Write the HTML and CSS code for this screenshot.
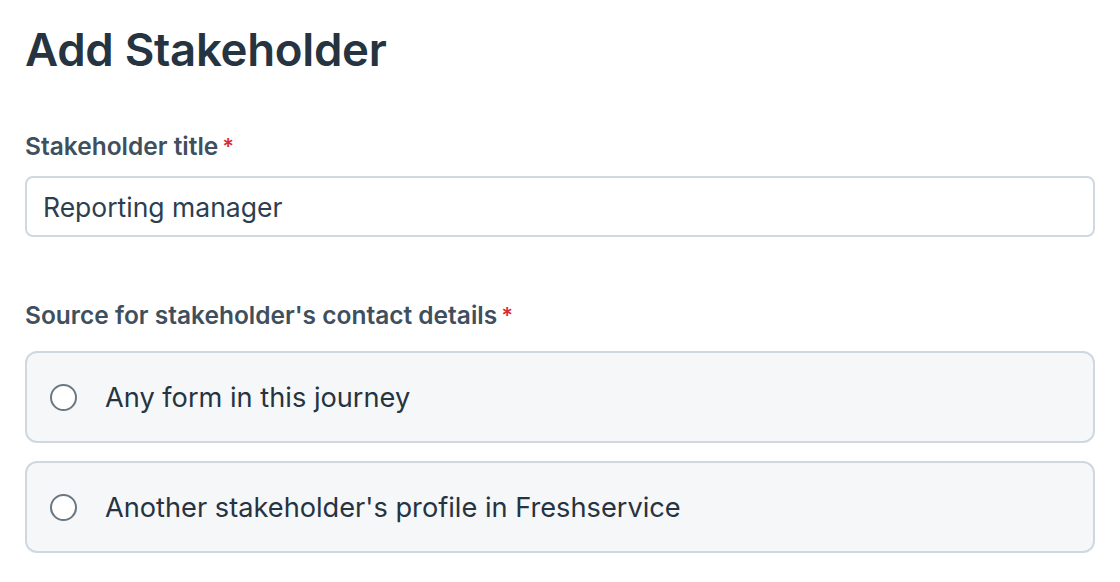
FILE: index.html
```html
<!DOCTYPE html>
<html lang="en">
<head>
<meta charset="utf-8">
<title>Add Stakeholder</title>
<link rel="stylesheet" href="styles.css">
</head>
<body>
<main class="page">
  <h1 class="title">Add Stakeholder</h1>
  <div class="field">
    <label class="label" for="st">Stakeholder title<span class="req">*</span></label>
    <div class="input" id="st">Reporting manager</div>
  </div>
  <div class="field field-radio">
    <div class="label">Source for stakeholder's contact details<span class="req">*</span></div>
    <div class="options">
      <div class="option"><span class="radio"></span><span class="option-text">Any form in this journey</span></div>
      <div class="option"><span class="radio"></span><span class="option-text">Another stakeholder's profile in Freshservice</span></div>
    </div>
  </div>
</main>
</body>
</html>
```
FILE: styles.css
```css
html, body {
  margin: 0;
  padding: 0;
  background: #ffffff;
}
body {
  font-family: Inter, "Noto Sans", sans-serif;
  color: #263340;
}
.page {
  padding: 22px 25px 0 25px;
  width: 1070px;
}
.title {
  margin: 0;
  font-size: 45.6px;
  line-height: 56px;
  font-weight: 600;
  color: #263340;
  letter-spacing: -0.3px;
}
.field {
  margin-top: 53px;
}
.label {
  display: flex;
  align-items: flex-start;
  font-size: 24.5px;
  line-height: 30px;
  font-weight: 600;
  color: #404f5d;
}
.req {
  color: #d72d30;
  margin-left: 4px;
  font-size: 22px;
}
.input {
  margin-top: 15px;
  border: 2px solid #cfd8e1;
  border-radius: 8px;
  box-sizing: border-box;
  height: 61px;
  padding: 0 16px;
  display: flex;
  align-items: center;
  font-size: 26.5px;
  color: #2c3e50;
}
.field-radio {
  margin-top: 63px;
}
.options {
  margin-top: 21px;
  display: flex;
  flex-direction: column;
  gap: 18px;
}
.option {
  box-sizing: border-box;
  height: 92px;
  border: 2px solid #cfd8e1;
  border-radius: 12px;
  background: #f5f7f9;
  display: flex;
  align-items: center;
  padding-left: 23px;
}
.radio {
  box-sizing: border-box;
  width: 27px;
  height: 27px;
  border: 2px solid #6a7884;
  border-radius: 50%;
  background: #ffffff;
  flex: none;
}
.option-text {
  margin-left: 28px;
  font-size: 27.2px;
  color: #263340;
}
```
